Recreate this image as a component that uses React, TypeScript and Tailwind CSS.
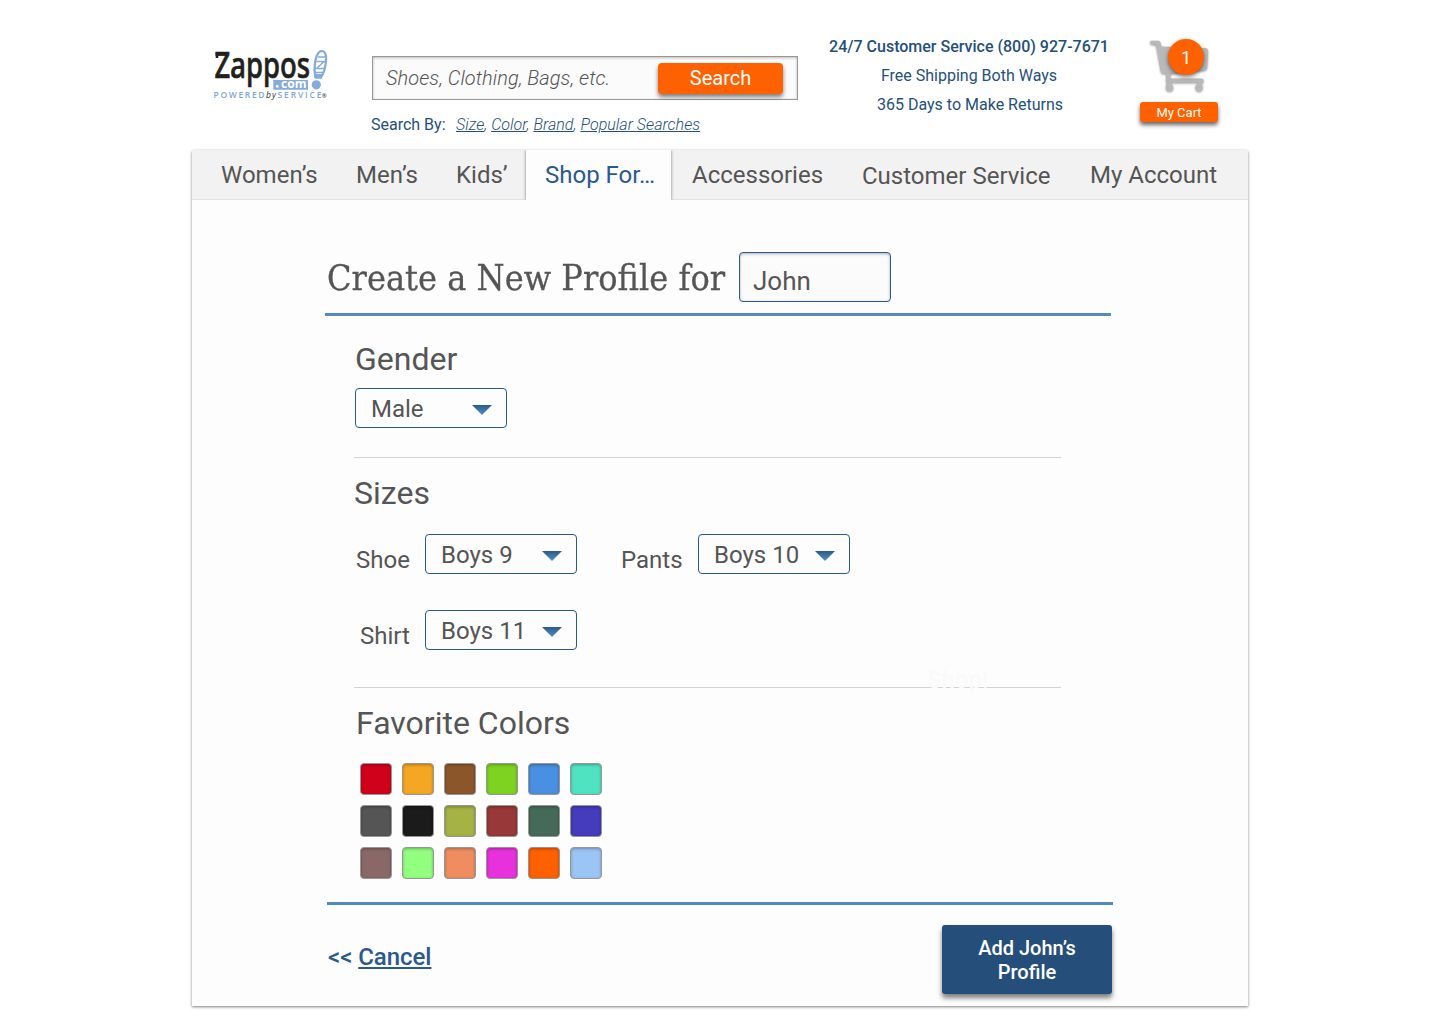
import { ReactNode } from "react";

const navItems = [
  { label: "Women’s", cell: "w-[164px] pl-[29px]" },
  { label: "Men’s", cell: "w-[100px]" },
  { label: "Kids’", cell: "w-[70px]" },
  { label: "Shop For…", cell: "w-[145px] pl-[19px] bg-[#fdfdfd] h-[50px] text-[#2a598d] shadow-[0_0_3px_rgba(0,0,0,0.5)] [clip-path:inset(0_-4px_0_-4px)]" },
  { label: "Accessories", cell: "w-[191px] pl-[21px]" },
  { label: "Customer Service", cell: "w-[228px] pt-px" },
  { label: "My Account", cell: "w-[158px]" },
];

const swatches = [
  "bg-[#d0021b]", "bg-[#f5a623]", "bg-[#8b572a]", "bg-[#7ed321]", "bg-[#4a90e2]", "bg-[#50e3c2]",
  "bg-[#555555]", "bg-[#1b1b1b]", "bg-[#a5b244]", "bg-[#983838]", "bg-[#446b5a]", "bg-[#443bbd]",
  "bg-[#8b6868]", "bg-[#92ff7e]", "bg-[#ef8d60]", "bg-[#e631dc]", "bg-[#ff6000]", "bg-[#9bc5f5]",
];

function Logo() {
  return (
    <svg className="mt-[46px] ml-[20px] h-[58px] w-[120px]" viewBox="212 46 120 58">
      <text x="214.500" y="77.500" fontFamily="Noto Sans" fontWeight="500" fontSize="37" textLength="95.500" lengthAdjust="spacingAndGlyphs" fill="#231f20" stroke="#231f20" strokeWidth="0.7">Zappos</text>
      <path d="M217 52v6M233 71.500v5" stroke="#231f20" strokeWidth="2.600" fill="none" />
      <path d="M273.300 80h34.700v9.700h-34.700z" fill="#86abd8" />
      <circle cx="277.300" cy="86.300" r="1.500" fill="#fff" />
      <text x="281" y="88" fontFamily="Open Sans" fontWeight="700" fontSize="12.500" textLength="25.500" lengthAdjust="spacingAndGlyphs" fill="#fff">com</text>
      <path d="M320.800 51.200c4-1 5.700 3 5.200 9.300-.5 7.500-2.500 13-5 17h-5.500c-1-4-1.500-9-.5-14.500 1-6.500 2.800-10.800 5.800-11.800z" fill="#fff" stroke="#86abd8" strokeWidth="2.300" />
      <path d="M318 57h7M316.500 61.500h8.500M317 68l7-6.500M315.500 68.500h9M315.500 72.500h7.500" stroke="#86abd8" strokeWidth="1.500" fill="none" />
      <path d="M315.500 74h7l-1.500 4h-5z" fill="#86abd8" />
      <circle cx="316.300" cy="84.800" r="4.600" fill="#86abd8" />
      <g fontFamily="Open Sans" fontSize="8.500" fill="#7fa6d3" fontWeight="600">
        <text x="213.500" y="98.300" textLength="51">POWERED</text>
        <text x="266" y="98.300" textLength="10" fontStyle="italic" fontWeight="400" fill="#333">by</text>
        <text x="277.500" y="98.300" textLength="44">SERVICE</text>
        <text x="321.800" y="98" fontSize="6" fill="#333">®</text>
      </g>
    </svg>
  );
}

function Cart() {
  return (
    <div className="relative mt-[36px] h-[66px] w-[78px]">
      <svg className="h-[62px] w-[78px] drop-shadow-[0_1px_1px_rgba(0,0,0,0.4)]" viewBox="1140 36 78 62">
        <path d="M1151 40.800h7.500q1.500 0 2 2l1 3.700 44 1.500q2.500.2 2.500 2.500l-.8 17q-.2 2.300-2.500 2.700l-35 3.500v4.800h32q1.800 0 1.800 1.800v2.200h-36q-1.500 0-1.500-1.500v-7.500h-3.500q-1.300 0-1.600-1.500l-5-27-5-1q-1.200-.6-1-2z" fill="#b9b9b9" />
        <circle cx="1169.500" cy="87.500" r="3.700" fill="#b9b9b9" />
        <circle cx="1199" cy="87.500" r="3.700" fill="#b9b9b9" />
        <path d="M1166.500 74h4v12h-4zM1198 80h4v6h-4z" fill="#b9b9b9" />
      </svg>
      <span className="absolute top-[3px] left-[28px] size-[36px] rounded-full bg-[#ff6000] text-center text-[18px] leading-[37px] text-white shadow-[0_2px_4px_rgba(0,0,0,0.5)]">1</span>
    </div>
  );
}

function Select({ value }: { value: string }) {
  return (
    <button className="flex h-[40px] w-[152px] items-center justify-between rounded-[4px] border border-[#2a598d] bg-[#fdfdfd] pr-[14px] pl-[15px] text-[24px] leading-[38px] whitespace-nowrap">
      <span className="pt-[2px]">{value}</span>
      <svg className="mt-[3px] h-[10px] w-[20px]" viewBox="0 0 20 10">
        <defs>
          <linearGradient id="arrow" x2="0" y2="1">
            <stop stopColor="#2a598d" />
            <stop offset="1" stopColor="#5590c8" />
          </linearGradient>
        </defs>
        <path d="M0 0h20L10 10z" fill="url(#arrow)" />
      </svg>
    </button>
  );
}

function Heading({ children, className }: { children: ReactNode; className: string }) {
  return <h2 className={`h-[40px] text-[32px] leading-[40px] whitespace-nowrap ${className}`}>{children}</h2>;
}

export default function App() {
  return (
    <div className="h-[1024px] w-[1440px] overflow-hidden bg-white font-['Roboto',sans-serif] text-[#555]">
      <div className="ml-[192px] w-[1056px]">
        <header className="flex h-[150px] items-start">
          <Logo />
          <div className="mt-[56px] ml-[39px] w-[427px]">
            <div className="ml-px flex h-[44px] w-[426px] items-start border border-[#979797] bg-[#fbfbfb] pl-[13px] shadow-[inset_0_1px_3px_rgba(0,0,0,0.25)]">
              <span className="w-[272px] text-[20px] leading-[43px] font-light tracking-[0.05px] italic">Shoes, Clothing, Bags, etc.</span>
              <button className="mt-[6px] h-[31px] w-[125px] rounded-[4px] bg-[#ff6000] text-[20px] leading-[31px] text-white shadow-[0_3px_4px_rgba(0,0,0,0.5)]">Search</button>
            </div>
            <div className="mt-[15px] flex text-[16px] leading-[20px] whitespace-nowrap text-[#254f7a]">
              <span className="w-[85px]">Search By:</span>
              <span className="font-light tracking-[0.03px] italic"><u>Size</u>, <u>Color</u>, <u>Brand</u>, <u>Popular Searches</u></span>
            </div>
          </div>
          <div className="mt-[32px] w-[342px] text-center text-[16px] leading-[29px] whitespace-nowrap text-[#254f7a]">
            <p className="font-medium">24/7 Customer Service (800) 927-7671</p>
            <p>Free Shipping Both Ways</p>
            <p className="pl-[2px]">365 Days to Make Returns</p>
          </div>
          <div className="w-[78px]">
            <Cart />
            <button className="block h-[20px] w-[78px] rounded-[3px] bg-[#ff6000] text-center text-[13px] leading-[21px] text-white shadow-[0_3px_4px_rgba(0,0,0,0.6)]">My Cart</button>
          </div>
        </header>

        <main className="h-[856px] rounded-t-[2px] bg-[#fdfdfd] shadow-[0_1px_3px_rgba(0,0,0,0.5)]">
          <nav className="flex h-[50px] border-b border-[#e2e2e2] bg-[#f2f2f2] text-[24px] leading-[50px] whitespace-nowrap">
            {navItems.map((n) => <a key={n.label} className={n.cell}>{n.label}</a>)}
          </nav>

          <div className="ml-[133px] w-[788px]">
            <div className="flex h-[116px] w-[786px] items-end border-b-[3px] border-[#5289c0] pb-[11px]">
              <h1 className="w-[414px] pl-[2px] font-['Roboto_Slab','DejaVu_Serif',serif] text-[36px] leading-[48px] whitespace-nowrap">
                <span className="inline-block origin-left scale-x-[0.892] [-webkit-text-stroke:0.3px_#555]">Create a New Profile for</span>
              </h1>
              <div className="h-[50px] w-[152px] rounded-[4px] border border-[#2a598d] bg-[#fbfbfb] pl-[13px] text-[26px] leading-[57px] shadow-[inset_0_1px_3px_rgba(0,0,0,0.3)]">John</div>
            </div>

            <section className="ml-[29px] h-[142px] w-[707px] border-b border-[#d3d3d3] pt-[23px]">
              <Heading className="pl-px">Gender</Heading>
              <div className="mt-[9px] ml-px"><Select value="Male" /></div>
            </section>

            <section className="ml-[29px] h-[230px] w-[707px] border-b border-[#d3d3d3] pt-[15px]">
              <Heading className="">Sizes</Heading>
              <div className="mt-[21px] flex text-[24px] leading-[52px]">
                <span className="w-[71px] pl-[2px]">Shoe</span>
                <Select value="Boys 9" />
                <span className="w-[121px] pl-[44px]">Pants</span>
                <Select value="Boys 10" />
              </div>
              <div className="mt-[24px] flex text-[24px] leading-[52px]">
                <span className="w-[71px] pl-[6px]">Shirt</span>
                <Select value="Boys 11" />
              </div>
            </section>

            <section className="relative ml-[29px] h-[214px] pt-[15px]">
              <span className="absolute -top-[23px] left-[573px] text-[24px] leading-[30px] font-medium text-[#fafafa]">Shop!</span>
              <Heading className="pl-[2px]">Favorite Colors</Heading>
              <div className="mt-[20px] ml-[6px] grid w-[242px] grid-cols-6 gap-[10px]">
                {swatches.map((c) => <span key={c} className={`size-[32px] rounded-[4px] border border-[#979797] shadow-[inset_0_1px_3px_rgba(0,0,0,0.3)] ${c}`} />)}
              </div>
            </section>

            <footer className="ml-[2px] flex h-[92px] w-[786px] justify-between border-t-[3px] border-[#5289c0] pr-px">
              <a className="mt-[37px] pl-px text-[24px] leading-[30px] font-medium tracking-[-0.05px] text-[#2a598d]">&lt;&lt; <span className="underline">Cancel</span></a>
              <button className="mt-[20px] h-[69px] w-[170px] rounded-[3px] bg-[#254f7a] text-[20px] leading-[24px] font-medium text-white shadow-[0_4px_5px_rgba(0,0,0,0.5)]">Add John’s<br />Profile</button>
            </footer>
          </div>
        </main>
      </div>
    </div>
  );
}
